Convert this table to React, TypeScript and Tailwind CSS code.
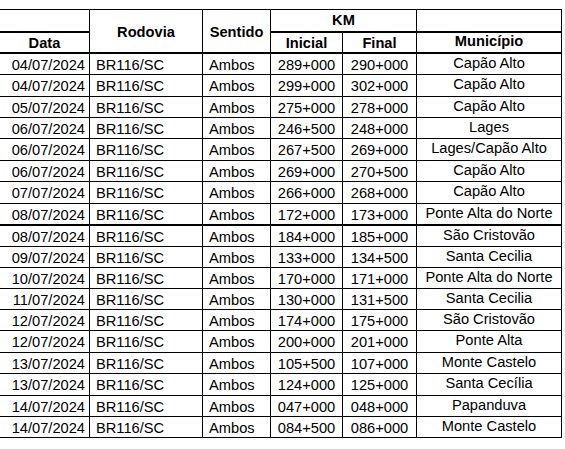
const rows: [string, string, string, string, number][] = [
  ["04/07/2024", "289+000", "290+000", "Capão Alto", 21],
  ["04/07/2024", "299+000", "302+000", "Capão Alto", 22],
  ["05/07/2024", "275+000", "278+000", "Capão Alto", 21],
  ["06/07/2024", "246+500", "248+000", "Lages", 21],
  ["06/07/2024", "267+500", "269+000", "Lages/Capão Alto", 22],
  ["06/07/2024", "269+000", "270+500", "Capão Alto", 21],
  ["07/07/2024", "266+000", "268+000", "Capão Alto", 22],
  ["08/07/2024", "172+000", "173+000", "Ponte Alta do Norte", 22],
  ["08/07/2024", "184+000", "185+000", "São Cristovão", 21],
  ["09/07/2024", "133+000", "134+500", "Santa Cecilia", 21],
  ["10/07/2024", "170+000", "171+000", "Ponte Alta do Norte", 21],
  ["11/07/2024", "130+000", "131+500", "Santa Cecilia", 21],
  ["12/07/2024", "174+000", "175+000", "São Cristovão", 21],
  ["12/07/2024", "200+000", "201+000", "Ponte Alta", 22],
  ["13/07/2024", "105+500", "107+000", "Monte Castelo", 21],
  ["13/07/2024", "124+000", "125+000", "Santa Cecília", 22],
  ["14/07/2024", "047+000", "048+000", "Papanduva", 21],
  ["14/07/2024", "084+500", "086+000", "Monte Castelo", 21],
];

const cols = "grid grid-cols-[90px_113px_68px_72px_74px_145px]";
const cell = "flex items-center border-r border-black whitespace-nowrap overflow-visible";

export default function App() {
  return (
    <div className="min-h-[449px] w-[565px] bg-white pt-[9px] font-['Liberation_Sans',Arial,sans-serif] text-[14.67px] leading-none text-black">
      <div className="w-[562px] border-t border-black">
        {/* header */}
        <div className={`${cols} grid-rows-[23px_21px] font-bold`}>
          <div className={`${cell} border-b-2`} />
          <div className={`${cell} row-span-2 justify-center border-b-2 pt-[2px]`}>Rodovia</div>
          <div className={`${cell} row-span-2 justify-center border-b-2 pt-[2px]`}>Sentido</div>
          <div className={`${cell} col-span-2 justify-center border-b-2`}>KM</div>
          <div className={`${cell} border-b-2`} />
          <div className={`${cell} justify-center border-b-2 pt-[2px]`}>Data</div>
          <div className={`${cell} justify-center border-b-2 pt-[2px]`}>Inicial</div>
          <div className={`${cell} justify-center border-b-2 pt-[2px]`}>Final</div>
          <div className={`${cell} justify-center border-b-2 pb-[2px]`}>Município</div>
        </div>

        {/* rows */}
        {rows.map(([date, ini, fim, mun, h], i) => (
          <div
            key={i}
            className={`${cols} border-black ${i === 7 ? "border-b-2" : "border-b"}`}
            style={{ height: h }}
          >
            <div className={`${cell} justify-end pr-[4px] pt-[2px]`}>{date}</div>
            <div className={`${cell} pl-[6px] pt-[2px]`}>BR116/SC</div>
            <div className={`${cell} pl-[6px] pt-[2px]`}>Ambos</div>
            <div className={`${cell} justify-center pt-[2px]`}>{ini}</div>
            <div className={`${cell} justify-center pt-[2px]`}>{fim}</div>
            <div className={`${cell} justify-center pb-[2px]`}>{mun}</div>
          </div>
        ))}
      </div>
    </div>
  );
}
